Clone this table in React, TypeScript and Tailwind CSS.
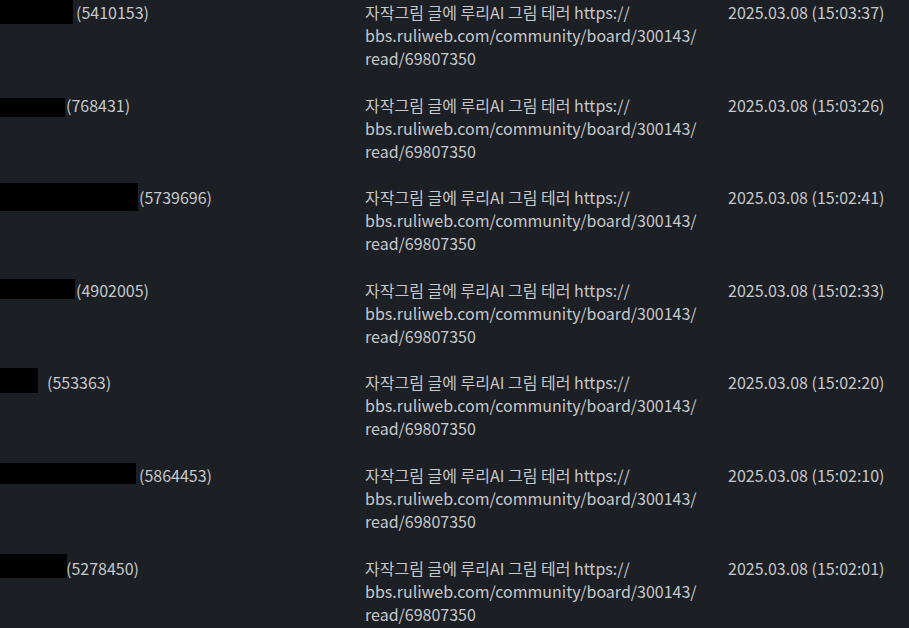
type Row = {
  boxW: number;
  boxTop: number;
  boxH: number;
  numX: number;
  id: string;
  date: string;
};

const rows: Row[] = [
  { boxW: 73, boxTop: -1, boxH: 24, numX: 76, id: "5410153", date: "2025.03.08 (15:03:37)" },
  { boxW: 65, boxTop: 4, boxH: 19, numX: 66, id: "768431", date: "2025.03.08 (15:03:26)" },
  { boxW: 138, boxTop: -3, boxH: 28, numX: 139, id: "5739696", date: "2025.03.08 (15:02:41)" },
  { boxW: 75, boxTop: 0, boxH: 20, numX: 76, id: "4902005", date: "2025.03.08 (15:02:33)" },
  { boxW: 38, boxTop: -3, boxH: 25, numX: 47, id: "553363", date: "2025.03.08 (15:02:20)" },
  { boxW: 136, boxTop: -1, boxH: 21, numX: 139, id: "5864453", date: "2025.03.08 (15:02:10)" },
  { boxW: 67, boxTop: -3, boxH: 24, numX: 66, id: "5278450", date: "2025.03.08 (15:02:01)" },
];

const LogRow = ({ boxW, boxTop, boxH, numX, id, date }: Row) => {
  return (
    <div className="grid grid-cols-[365px_363px_1fr]">
      {/* 닉네임 (가림 처리) */}
      <div className="relative" style={{ paddingLeft: numX }}>
        <span>({id})</span>
        <span
          className="absolute left-0 bg-black"
          style={{ top: boxTop, width: boxW, height: boxH }}
        />
      </div>

      {/* 사유 */}
      <p className="w-[355px]">
        자작그림 글에 루리AI 그림 테러 https://
        <wbr />
        bbs.ruliweb.com/community/board/300143/
        <wbr />
        read/69807350
      </p>

      {/* 날짜 */}
      <p className="whitespace-nowrap">{date}</p>
    </div>
  );
};

export default function App() {
  return (
    <div
      className="min-h-screen bg-[#1c1f24] text-[#c6c8cb] text-base leading-[23px] pt-[1px] flex flex-col gap-[23.6px] overflow-hidden"
      style={{ fontFamily: '"Noto Sans CJK KR", "Noto Sans", sans-serif' }}
    >
      {rows.map((r) => (
        <LogRow key={r.id} {...r} />
      ))}
    </div>
  );
}
